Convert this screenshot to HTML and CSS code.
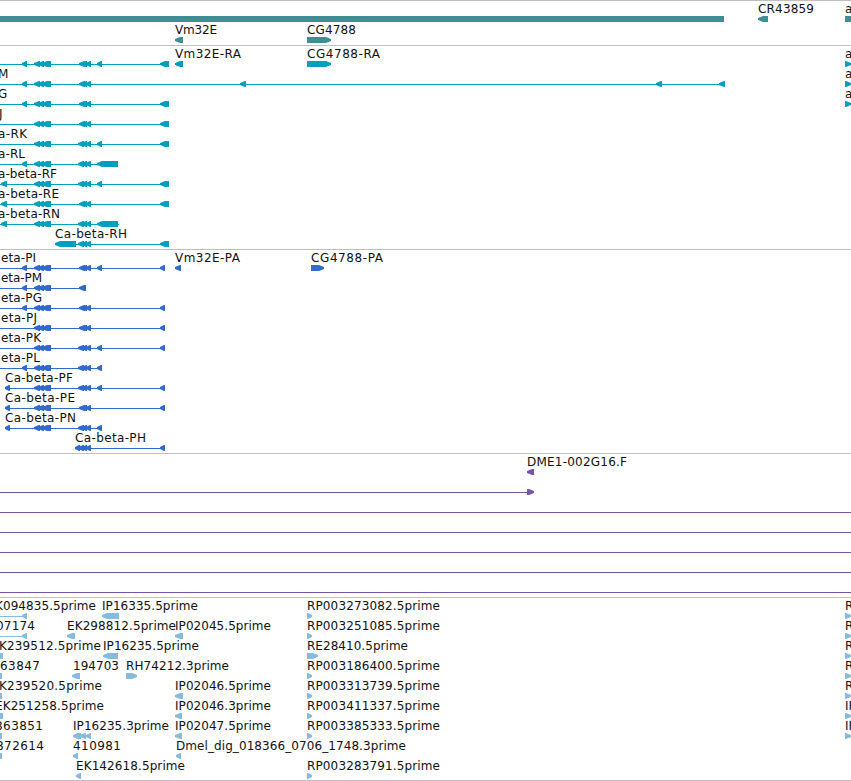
FILE: index.html
```html
<!DOCTYPE html>
<html lang="en">
<head>
<meta charset="utf-8">
<title>Genome browser</title>
<link rel="stylesheet" href="styles.css">
</head>
<body>
<main id="browser" class="browser"></main>
<script src="tracks.js"></script>
</body>
</html>
```
FILE: styles.css
```css
body {
  margin: 0;
  background: #fff;
}
.browser {
  display: flex;
  flex-direction: column;
  width: 851px;
  height: 781px;
  overflow: hidden;
}
.track {
  display: flex;
  flex-direction: column;
  box-sizing: border-box;
  border-top: 1px solid #bfbfbf;
}
.track-gene { height: 45px; gap: 1px; color: #3d8f94; }
.track-transcript { height: 204px; color: #009ebf; }
.track-protein { height: 204px; color: #306acb; }
.track-clone { height: 144px; color: #7753a9; }
.track-est { height: 184px; color: #87bbdc; border-bottom: 1px solid #bfbfbf; }
.row {
  display: block;
  flex: none;
  width: 851px;
  height: 20px;
  overflow: visible;
  fill: currentColor;
}
.label {
  fill: #111;
  font: 12px "DejaVu Sans", sans-serif;
}
```
FILE: tracks.js
```js
// Each row: labels [text, left, right], spans (thin lines) and features.
// Features: [start, end] points left, [start, end, 1] right, [start, end, 0] is a plain block.
const A = [[22, 27]];
const B = [[34, 40], [38, 44], [42, 51]];
const C = [[79, 85], [82, 87], [86, 91]];
const C2 = [[78, 84], [82, 87], [86, 91]];
const D = [[97, 102]];
const E = [[160, 169]];
const P = [[160, 165]];
const END = [[845, 851, 1]];
const r = (labels, spans, ...features) => ({ labels, spans, features: features.flat() });

const tracks = {
  gene: [
    r([["CR43859", 758, 814], ["a", 845]], [], [[0, 724, 0], [758, 768], [845, 851, 0]]),
    r([["Vm32E", 175, 217], ["CG4788", 307, 356]], [], [[175, 183], [307, 331, 1]])
  ],
  transcript: [
    r([["Vm32E-RA", 175, 241], ["CG4788-RA", 307, 380], ["a", 845]], [[0, 169]], A, B, C, D, E, [[175, 183], [307, 331, 1]], END),
    r([["M", -2], ["a", 845]], [[0, 725]], A, B, C, [[240, 246], [656, 662], [719, 725]], END),
    r([["G", -2], ["a", 845]], [[0, 169]], A, B, C, E, END),
    r([["J", -1]], [[0, 169]], B, C, E),
    r([["a-RK", -2, 27]], [[0, 169]], B, C2, D, E),
    r([["a-RL", -2, 25]], [[0, 118]], A, B, C2, [[97, 118]]),
    r([["a-beta-RF", -2, 57]], [[0, 169]], [[1, 7]], B, C2, D, E),
    r([["a-beta-RE", -2, 59]], [[0, 169]], [[1, 7]], B, C, E),
    r([["a-beta-RN", -2, 60]], [[0, 119]], [[1, 7]], B, C2, [[97, 118]]),
    r([["Ca-beta-RH", 55, 127]], [[55, 169]], [[55, 76]], C2, E)
  ],
  protein: [
    r([["eta-PI", 1, 36], ["Vm32E-PA", 175, 240], ["CG4788-PA", 311, 383]], [[0, 165]], A, B, C, D, P, [[175, 181], [311, 324, 1]]),
    r([["eta-PM", 1, 42]], [[0, 86]], A, B, [[79, 85], [82, 86]]),
    r([["eta-PG", 1, 42]], [[0, 165]], A, B, C, P),
    r([["eta-PJ", 1, 37]], [[0, 165]], B, C, P),
    r([["eta-PK", 1, 41]], [[0, 165]], B, C2, D, P),
    r([["eta-PL", 1, 40]], [[0, 102]], A, B, C2, D),
    r([["Ca-beta-PF", 5, 73]], [[5, 165]], [[5, 10]], B, C2, D, P),
    r([["Ca-beta-PE", 5, 75]], [[5, 165]], [[5, 10]], B, C, P),
    r([["Ca-beta-PN", 5, 76]], [[5, 102]], [[5, 10]], B, C2, D),
    r([["Ca-beta-PH", 75, 146]], [[75, 165]], [[75, 80]], C2, P)
  ],
  clone: [
    r([["DME1-002G16.F", 527, 627]], [], [[527, 534]]),
    r([], [[0, 528]], [[527, 534, 1]]),
    r([], [[0, 851]]),
    r([], [[0, 851]]),
    r([], [[0, 851]]),
    r([], [[0, 851]]),
    r([], [[0, 851]])
  ],
  est: [
    r([["K094835.5prime", -5, 96], ["IP16335.5prime", 102, 198], ["RP003273082.5prime", 307, 440], ["R", 845]], [[0, 26]], A, [[102, 119], [307, 312, 1]], END),
    r([["07174", -4, 35], ["EK298812.5prime", 67, 176], ["IP02045.5prime", 175, 271], ["RP003251085.5prime", 307, 440], ["R", 845]], [[0, 26]], A, [[67, 75], [175, 183], [307, 312, 1]], END),
    r([["K239512.5prime", -1, 101], ["IP16235.5prime", 103, 199], ["RE28410.5prime", 307, 408], ["R", 845]], [], [[0, 3, 0], [103, 118], [307, 318, 1]], END),
    r([["63847", 0, 40], ["194703", 73, 119], ["RH74212.3prime", 126, 229], ["RP003186400.5prime", 307, 440], ["R", 845]], [], [[0, 2, 0], [72, 80], [126, 137, 1], [307, 312, 1]], END),
    r([["K239520.5prime", -1, 102], ["IP02046.5prime", 175, 271], ["RP003313739.5prime", 307, 440], ["R", 845]], [], [[0, 2, 0], [175, 183], [307, 312, 1]], END),
    r([["EK251258.5prime", -5, 104], ["IP02046.3prime", 175, 271], ["RP003411337.5prime", 307, 440], ["IP", 845]], [], [[0, 3, 0], [175, 182], [307, 312, 1]], END),
    r([["863851", -5, 43], ["IP16235.3prime", 73, 169], ["IP02047.5prime", 175, 271], ["RP003385333.5prime", 307, 440], ["IP", 845]], [], [[0, 2, 0], [73, 81], [80, 86], [86, 91], [175, 182], [307, 312, 1]], END),
    r([["872614", -4, 44], ["410981", 73, 121], ["Dmel_dig_018366_0706_1748.3prime", 176, 406]], [], [[-3, 2], [73, 78], [176, 181]]),
    r([["EK142618.5prime", 76, 185], ["RP003283791.5prime", 307, 440]], [], [[76, 81], [307, 312, 1]])
  ]
};

function shape([a, b, dir]) {
  if (dir === 0) return `<rect x="${a}" y="15" width="${b - a}" height="6"/>`;
  const head = Math.min(5, b - a - 1);
  return dir === 1
    ? `<path d="M${a} 15H${b - head}L${b} 17V19L${b - head} 21H${a}Z"/>`
    : `<path d="M${b} 15H${a + head}L${a} 17V19L${a + head} 21H${b}Z"/>`;
}

function row({ labels, spans, features }) {
  const lines = spans.map(([a, b]) => `<rect x="${a}" y="18" width="${b - a}" height="1"/>`);
  const texts = labels.map(([text, x, end]) =>
    `<text class="label" x="${x}" y="12"${end ? ` textLength="${end - x}"` : ""}>${text}</text>`);
  return `<svg class="row" viewBox="0 0 851 20">${lines.join("")}${features.map(shape).join("")}${texts.join("")}</svg>`;
}

document.getElementById("browser").innerHTML = Object.entries(tracks)
  .map(([name, rows]) => `<section class="track track-${name}">${rows.map(row).join("")}</section>`)
  .join("");
```
